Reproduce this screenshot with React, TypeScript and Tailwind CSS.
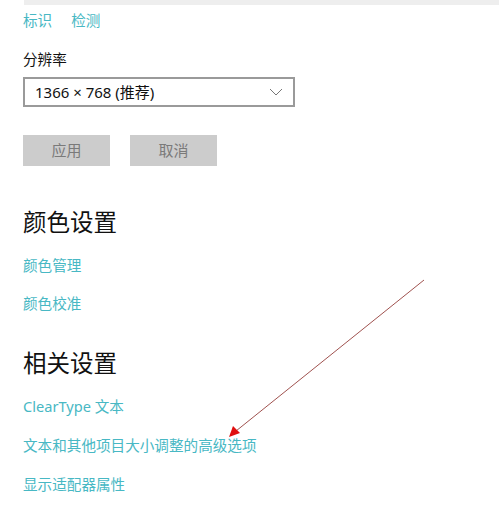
export default function App() {
  const font = { fontFamily: '"Noto Sans", "Noto Sans CJK SC", sans-serif' };
  const link = 'text-[14.6px] leading-[20px] text-[#48b8c4]';

  return (
    <div className="relative w-[499px] h-[508px] bg-white overflow-hidden" style={font}>
      <div className="ml-[24px] h-[5px] bg-[#eeeeee]" />

      <div className="pl-[23px]">
        <div className="mt-[5px] flex gap-[19px]">
          <span className={link}>标识</span>
          <span className={link}>检测</span>
        </div>

        <div className="mt-[19px] text-[14.6px] leading-[20px] text-[#111]">分辨率</div>

        <div className="mt-[8px] w-[272px] h-[30px] border-2 border-[#9a9a9a] flex items-center justify-between pl-[10px] pr-[8px]">
          <span className="text-[15px] text-[#111]">1366 × 768 (推荐)</span>
          <svg width="14" height="8" viewBox="0 0 14 8" className="mr-[2px]">
            <path d="M1 1 L7 7 L13 1" fill="none" stroke="#777" strokeWidth="1" />
          </svg>
        </div>

        <div className="mt-[28px] flex gap-[20px]">
          <div className="w-[87px] h-[31px] bg-[#cccccc] flex items-center justify-center text-[15px] text-[#7a7a7a]">应用</div>
          <div className="w-[87px] h-[31px] bg-[#cccccc] flex items-center justify-center text-[15px] text-[#7a7a7a]">取消</div>
        </div>

        <h2 className="mt-[40px] text-[23.5px] leading-[32px] text-[#111]">颜色设置</h2>
        <div className={`mt-[17px] ${link}`}>颜色管理</div>
        <div className={`mt-[18px] ${link}`}>颜色校准</div>

        <h2 className="mt-[34px] text-[23.5px] leading-[32px] text-[#111]">相关设置</h2>
        <div className={`mt-[17px] ${link}`}>ClearType 文本</div>
        <div className={`mt-[19px] ${link}`}>文本和其他项目大小调整的高级选项</div>
        <div className={`mt-[19px] ${link}`}>显示适配器属性</div>
      </div>

      <svg className="absolute left-0 top-0" width="499" height="508" viewBox="0 0 499 508">
        <line x1="424" y1="280" x2="236" y2="431" stroke="#a0524f" strokeWidth="1" />
        <polygon points="229,437 233,426 240,433" fill="#e01010" />
      </svg>
    </div>
  );
}
